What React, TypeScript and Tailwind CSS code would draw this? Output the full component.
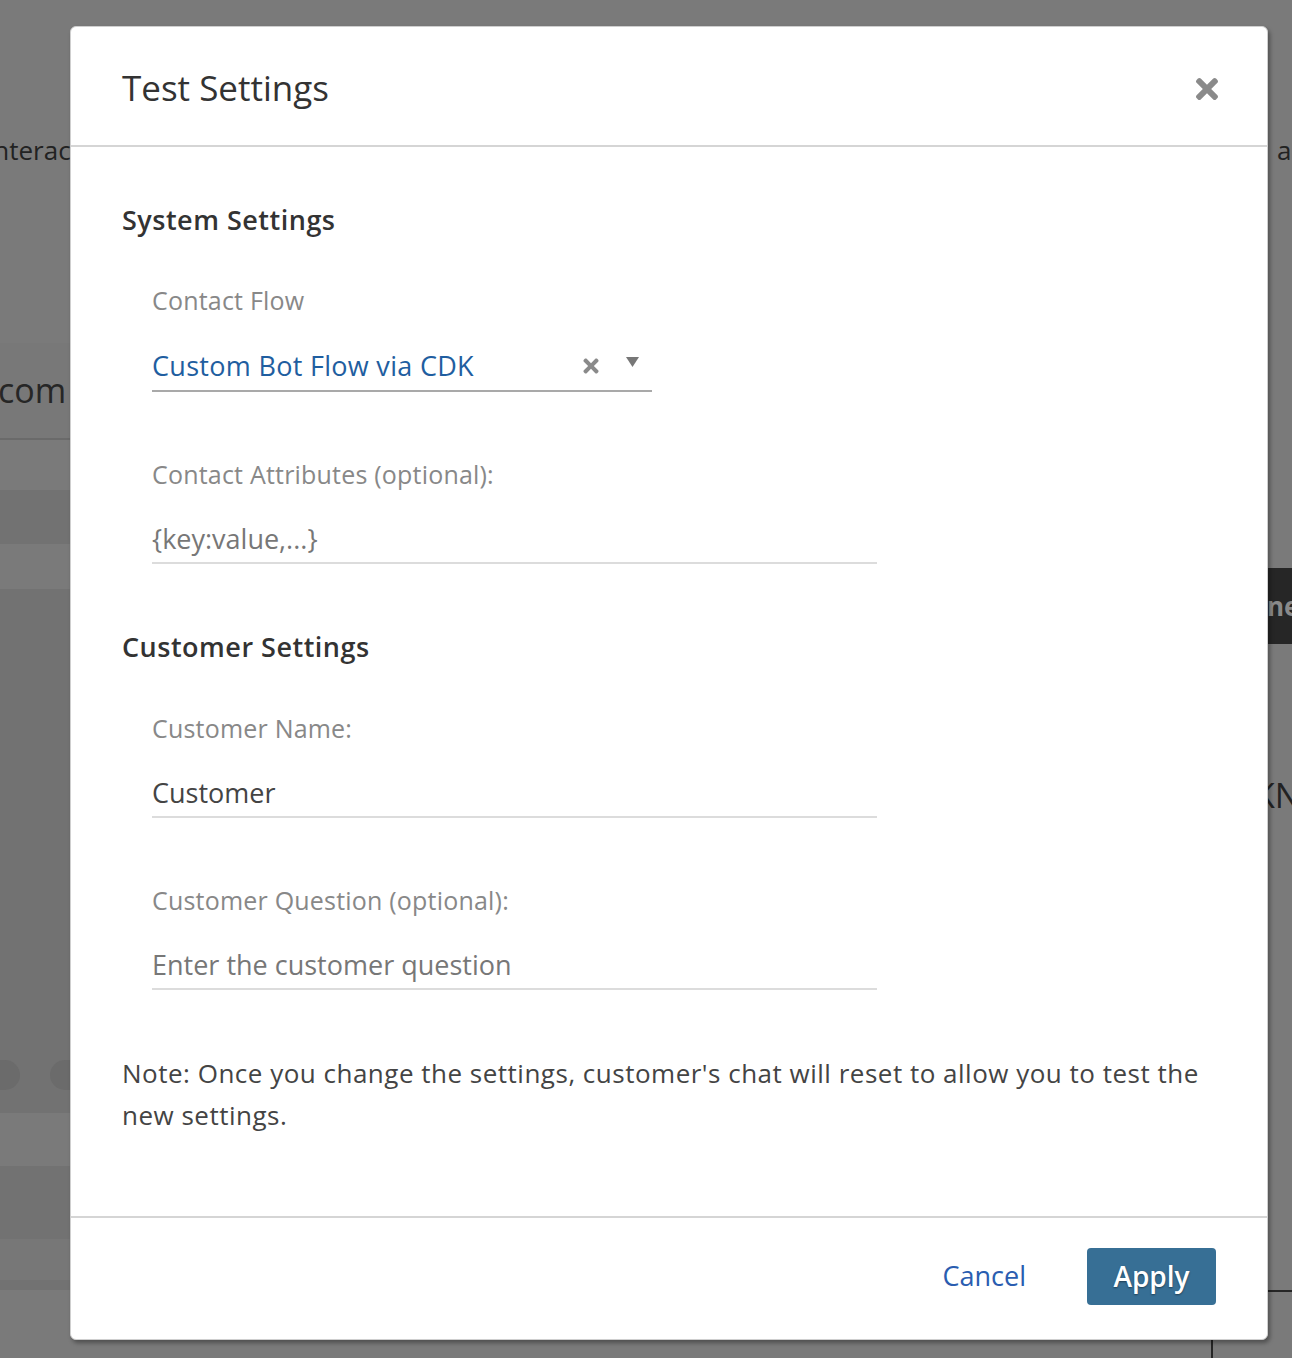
import { FaTimes } from 'react-icons/fa'

const font = { fontFamily: '"Open Sans", "Noto Sans", sans-serif' }

function Field({ label, children }: { label: string; children: React.ReactNode }) {
  return (
    <div className="pl-[30px]">
      <p className="text-[25px] leading-[34px] tracking-[0.2px] text-[#888]">{label}</p>
      {children}
    </div>
  )
}

function TextInput({ value, placeholder }: { value?: string; placeholder: string }) {
  return (
    <div className="mt-[30px] w-[725px] border-b-2 border-[#dcdcdc] pb-[5px]">
      <p className={`text-[27px] leading-[36px] ${value ? 'text-[#444]' : 'text-[#777]'}`}>
        {value ?? placeholder}
      </p>
    </div>
  )
}

export default function App() {
  return (
    <div className="relative h-[1358px] w-full overflow-hidden bg-[#7a7a7a]" style={font}>
      {/* Dimmed page behind the dialog */}
      <div className="flex h-full">
        <div className="flex flex-1 flex-col">
          <div className="h-[130px]" />
          <div className="flex h-[40px] items-center text-[26px] text-[#222]">
            <span className="-ml-[14px]">Interactions</span>
          </div>
          <div className="h-[173px]" />
          <div className="flex h-[97px] items-center border-b-2 border-[#6a6a6a] bg-[#787878] text-[34px] text-[#262626]">
            <span className="-ml-[2px]">com</span>
          </div>
          <div className="h-[50px] bg-[#7a7a7a]" />
          <div className="h-[54px] bg-[#727272]" />
          <div className="h-[45px] bg-[#7a7a7a]" />
          <div className="flex h-[524px] flex-col justify-end bg-[#727272]">
            <div className="mb-[23px] flex gap-[30px]">
              <div className="-ml-[16px] h-[30px] w-[36px] rounded-full bg-[#6b6b6b]" />
              <div className="h-[30px] w-[44px] rounded-full bg-[#6b6b6b]" />
            </div>
          </div>
          <div className="h-[53px] bg-[#7a7a7a]" />
          <div className="h-[73px] bg-[#727272]" />
          <div className="h-[41px] bg-[#777]" />
          <div className="h-[10px] bg-[#727272]" />
          <div className="flex flex-1 bg-[#7a7a7a]">
            <div className="ml-[1211px] flex-1 border-l-2 border-t-2 border-[#262626]" />
          </div>
        </div>
        <div className="flex w-[24px] flex-col">
          <div className="h-[130px]" />
          <div className="flex h-[40px] items-center text-[26px] text-[#222]">
            <span className="ml-[9px]">a</span>
          </div>
          <div className="h-[398px]" />
          <div className="flex h-[76px] items-center overflow-hidden bg-[#262626] text-[26px] font-bold text-[#8a8a8a]">
            <span className="-ml-[1px]">ne</span>
          </div>
          <div className="h-[126px]" />
          <div className="flex h-[50px] items-center overflow-hidden whitespace-nowrap text-[34px] text-[#222]">
            <span className="-ml-[14px]">KN</span>
          </div>
          <div className="h-[470px]" />
          <div className="flex-1 border-t-2 border-[#262626]" />
        </div>
      </div>

      {/* Dialog */}
      <div className="absolute left-[70px] top-[26px] flex w-[1198px] flex-col rounded-md border border-[#cfcfcf] bg-white shadow-[2px_3px_4px_rgba(0,0,0,0.35)]">
        <div className="flex h-[120px] items-center justify-between border-b-2 border-[#d5d5d5] pl-[51px] pr-[44px]">
          <h2 className="mt-[3px] text-[35px] leading-[44px] text-[#333]">Test Settings</h2>
          <FaTimes className="mt-[5px] text-[#8a8a8a]" size={32} />
        </div>

        <div className="px-[51px] pb-[80px] pt-[55px]">
          <h3 className="text-[27px] font-semibold leading-[36px] tracking-[0.5px] text-[#333]">System Settings</h3>

          <div className="mt-[45px]">
            <Field label="Contact Flow">
              <div className="mt-[31px] flex w-[500px] items-center border-b-2 border-[#a9a9a9] pb-[6px]">
                <p className="flex-1 text-[27px] leading-[36px] tracking-[0.3px] text-[#1f5ea0]">Custom Bot Flow via CDK</p>
                <FaTimes className="mr-[24px] text-[#8a8a8a]" size={22} />
                <svg className="mb-[8px] mr-[13px]" width="13" height="10" viewBox="0 0 13 10">
                  <path d="M0 0 H13 L6.5 10 Z" fill="#777" />
                </svg>
              </div>
            </Field>
          </div>

          <div className="mt-[65px]">
            <Field label="Contact Attributes (optional):">
              <TextInput placeholder="{key:value,...}" />
            </Field>
          </div>

          <h3 className="mt-[65px] text-[27px] font-semibold leading-[36px] tracking-[0.5px] text-[#333]">Customer Settings</h3>

          <div className="mt-[46px]">
            <Field label="Customer Name:">
              <TextInput value="Customer" placeholder="" />
            </Field>
          </div>

          <div className="mt-[65px]">
            <Field label="Customer Question (optional):">
              <TextInput placeholder="Enter the customer question" />
            </Field>
          </div>

          <p className="mt-[62px] text-[26px] leading-[42px] tracking-[0.5px] text-[#444]">
            Note: Once you change the settings, customer's chat will reset to allow you to test the new settings.
          </p>
        </div>

        <div className="flex h-[123px] items-center justify-end gap-[61px] border-t-2 border-[#d5d5d5] pb-[5px] pr-[51px]">
          <button className="text-[27px] text-[#2a5db0]">Cancel</button>
          <button className="h-[57px] w-[129px] rounded-[4px] bg-[#376f95] text-[28px] font-semibold text-white [text-shadow:0_1px_2px_rgba(0,0,0,0.45)]">
            Apply
          </button>
        </div>
      </div>
    </div>
  )
}
